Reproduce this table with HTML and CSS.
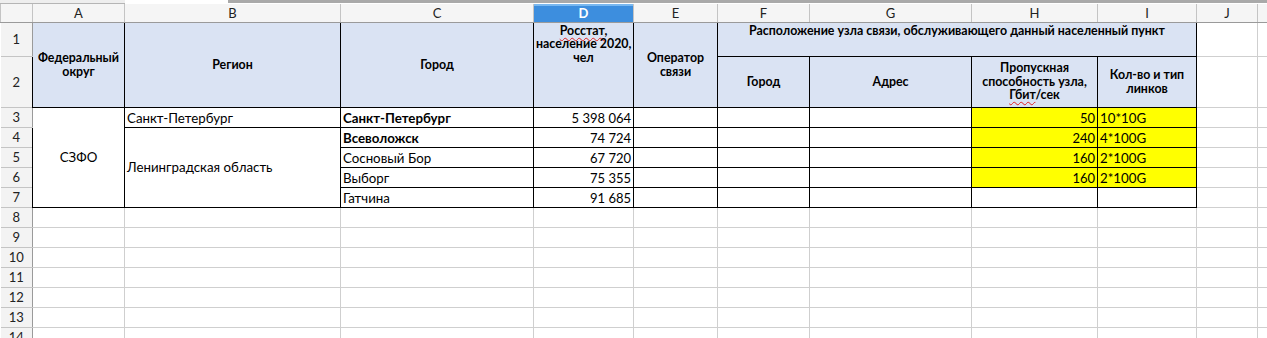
FILE: index.html
```html
<!DOCTYPE html>
<html lang="ru">
<head>
<meta charset="utf-8">
<title>Лист</title>
<link rel="stylesheet" href="styles.css">
</head>
<body>
<div class="topbar"><div class="seg seg1"></div><div class="seg seg2"></div><div class="seg seg3"></div></div>
<table class="sheet">
  <colgroup>
    <col class="w-rh"><col class="w-a"><col class="w-b"><col class="w-c"><col class="w-d"><col class="w-e"><col class="w-f"><col class="w-g"><col class="w-h"><col class="w-i"><col class="w-j"><col class="w-k">
  </colgroup>
  <tr class="colhdr">
    <th class="corner"></th><th>A</th><th>B</th><th>C</th><th class="sel">D</th><th>E</th><th>F</th><th>G</th><th>H</th><th>I</th><th>J</th><th></th>
  </tr>
  <tr class="r1">
    <th class="rn">1</th>
    <td class="h mid" rowspan="2">Федеральный<br>округ</td>
    <td class="h mid" rowspan="2">Регион</td>
    <td class="h mid" rowspan="2">Город</td>
    <td class="h top" rowspan="2"><span class="spell">Росстат</span>,<br>население 2020,<br>чел</td>
    <td class="h mid" rowspan="2">Оператор<br>связи</td>
    <td class="h top" colspan="4">Расположение узла связи, обслуживающего данный населенный пункт</td>
    <td class="g"></td><td class="g"></td>
  </tr>
  <tr class="r2">
    <th class="rn">2</th>
    <td class="h mid">Город</td>
    <td class="h mid">Адрес</td>
    <td class="h mid">Пропускная<br>способность узла,<br><span class="spell">Гбит</span>/сек</td>
    <td class="h mid">Кол-во и тип<br>линков</td>
    <td class="g"></td><td class="g"></td>
  </tr>
  <tr class="r">
    <th class="rn">3</th>
    <td class="b ctr" rowspan="5">СЗФО</td>
    <td class="b">Санкт-Петербург</td>
    <td class="b bold">Санкт-Петербург</td>
    <td class="b num">5 398 064</td>
    <td class="b"></td><td class="b"></td><td class="b"></td>
    <td class="b num y">50</td><td class="b y">10*10G</td>
    <td class="g"></td><td class="g"></td>
  </tr>
  <tr class="r">
    <th class="rn">4</th>
    <td class="b vmid" rowspan="4">Ленинградская область</td>
    <td class="b bold">Всеволожск</td>
    <td class="b num">74 724</td>
    <td class="b"></td><td class="b"></td><td class="b"></td>
    <td class="b num y">240</td><td class="b y">4*100G</td>
    <td class="g"></td><td class="g"></td>
  </tr>
  <tr class="r">
    <th class="rn">5</th>
    <td class="b">Сосновый Бор</td>
    <td class="b num">67 720</td>
    <td class="b"></td><td class="b"></td><td class="b"></td>
    <td class="b num y">160</td><td class="b y">2*100G</td>
    <td class="g"></td><td class="g"></td>
  </tr>
  <tr class="r">
    <th class="rn">6</th>
    <td class="b">Выборг</td>
    <td class="b num">75 355</td>
    <td class="b"></td><td class="b"></td><td class="b"></td>
    <td class="b num y">160</td><td class="b y">2*100G</td>
    <td class="g"></td><td class="g"></td>
  </tr>
  <tr class="r">
    <th class="rn">7</th>
    <td class="b">Гатчина</td>
    <td class="b num">91 685</td>
    <td class="b"></td><td class="b"></td><td class="b"></td>
    <td class="b"></td><td class="b"></td>
    <td class="g"></td><td class="g"></td>
  </tr>
  <tr class="r"><th class="rn">8</th><td class="g"></td><td class="g"></td><td class="g"></td><td class="g"></td><td class="g"></td><td class="g"></td><td class="g"></td><td class="g"></td><td class="g"></td><td class="g"></td><td class="g"></td></tr>
  <tr class="r"><th class="rn">9</th><td class="g"></td><td class="g"></td><td class="g"></td><td class="g"></td><td class="g"></td><td class="g"></td><td class="g"></td><td class="g"></td><td class="g"></td><td class="g"></td><td class="g"></td></tr>
  <tr class="r"><th class="rn">10</th><td class="g"></td><td class="g"></td><td class="g"></td><td class="g"></td><td class="g"></td><td class="g"></td><td class="g"></td><td class="g"></td><td class="g"></td><td class="g"></td><td class="g"></td></tr>
  <tr class="r"><th class="rn">11</th><td class="g"></td><td class="g"></td><td class="g"></td><td class="g"></td><td class="g"></td><td class="g"></td><td class="g"></td><td class="g"></td><td class="g"></td><td class="g"></td><td class="g"></td></tr>
  <tr class="r"><th class="rn">12</th><td class="g"></td><td class="g"></td><td class="g"></td><td class="g"></td><td class="g"></td><td class="g"></td><td class="g"></td><td class="g"></td><td class="g"></td><td class="g"></td><td class="g"></td></tr>
  <tr class="r"><th class="rn">13</th><td class="g"></td><td class="g"></td><td class="g"></td><td class="g"></td><td class="g"></td><td class="g"></td><td class="g"></td><td class="g"></td><td class="g"></td><td class="g"></td><td class="g"></td></tr>
  <tr class="r"><th class="rn">14</th><td class="g"></td><td class="g"></td><td class="g"></td><td class="g"></td><td class="g"></td><td class="g"></td><td class="g"></td><td class="g"></td><td class="g"></td><td class="g"></td><td class="g"></td></tr>
</table>
</body>
</html>
```
FILE: styles.css
```css
html, body {
  margin: 0;
  padding: 0;
  background: #ffffff;
  overflow: hidden;
}
body {
  font-family: "Lato", "Liberation Sans", sans-serif;
  color: #000;
}
.topbar {
  display: flex;
  height: 4px;
}
.seg1 {
  width: 125px;
  background: #eeeeee;
  border-bottom: 1px solid #b5b5b5;
  box-sizing: border-box;
}
.seg2 {
  width: 103px;
  background: #ffffff;
}
.seg3 {
  flex: 1;
  background: #ffffff;
  border-top: 3px solid #a9a9a9;
  box-sizing: border-box;
}
.sheet {
  border-collapse: collapse;
  table-layout: fixed;
  width: 1357px;
}
.w-rh { width: 32px; }
.w-a { width: 92px; }
.w-b { width: 216px; }
.w-c { width: 193px; }
.w-d { width: 100px; }
.w-e { width: 84px; }
.w-f { width: 92px; }
.w-g { width: 162px; }
.w-h { width: 126px; }
.w-i { width: 99px; }
.w-j { width: 61px; }
.w-k { width: 100px; }

.colhdr { height: 18px; }
.colhdr th {
  background: #f5f5f5;
  border: 1px solid #c4c4c4;
  border-top: none;
  border-bottom: 1px solid #9a9a9a;
  font-weight: normal;
  font-size: 13px;
  color: #222;
  padding: 0;
  line-height: 16px;
  text-align: center;
}
.colhdr th.sel {
  background: linear-gradient(#7ab8ef 0, #7ab8ef 2px, #3d8ede 2px);
  color: #fff;
  font-weight: bold;
}
.rn {
  background: #f3f3f3;
  border: 1px solid #c4c4c4;
  border-left: none;
  border-right: 1px solid #9a9a9a;
  font-weight: normal;
  font-size: 13px;
  color: #222;
  padding: 0;
  text-align: center;
  vertical-align: middle;
  line-height: 16px;
}
.r1 { height: 34px; }
.r2 { height: 51px; }
.r { height: 20px; }

td {
  padding: 0 2px;
  overflow: hidden;
  white-space: nowrap;
}
.g { border: 1px solid #cfcfcf; }
.h {
  background: #dae3f3;
  border: 1px solid #000;
  font-weight: bold;
  font-size: 12.4px;
  line-height: 13.5px;
  text-align: center;
}
.h.mid { vertical-align: middle; }
.h.top { vertical-align: top; padding-top: 1px; }
.b {
  border: 1px solid #000;
  font-size: 13.3px;
  line-height: 18px;
  vertical-align: bottom;
}
.b.bold { font-weight: bold; }
.b.num { text-align: right; font-size: 13px; }
.b.ctr { text-align: center; vertical-align: middle; }
.b.vmid { vertical-align: middle; }
.b.y { background: #ffff00; }
.spell {
  text-decoration: underline wavy #e02020;
  text-decoration-thickness: 1px;
  text-underline-offset: 2px;
}
```
